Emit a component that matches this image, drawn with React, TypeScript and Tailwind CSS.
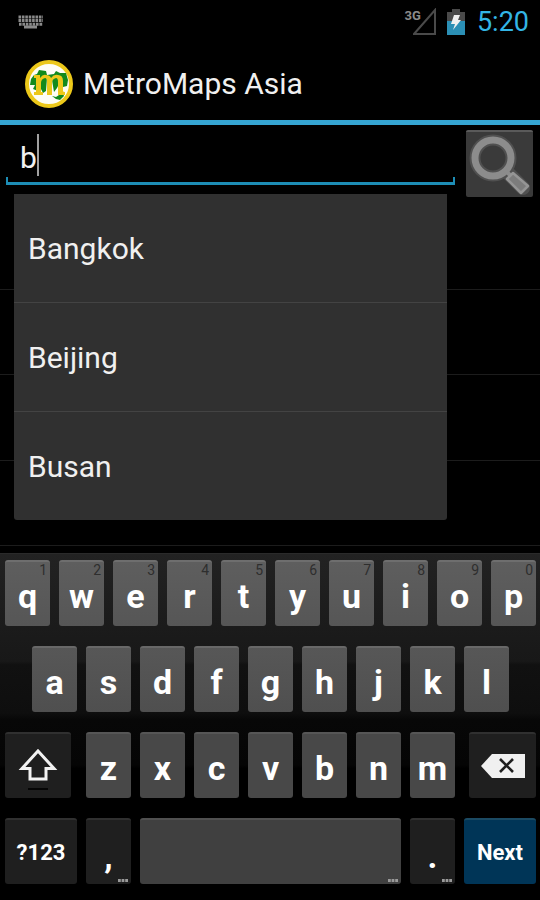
import React, { useState } from 'react'

interface KeyProps {
  label: string
  hint?: string
  className?: string
}

const cities = ['Bangkok', 'Beijing', 'Busan', 'Hong Kong', 'Tokyo']

const topRow = ['q', 'w', 'e', 'r', 't', 'y', 'u', 'i', 'o', 'p']
const middleRow = ['a', 's', 'd', 'f', 'g', 'h', 'j', 'k', 'l']
const bottomRow = ['z', 'x', 'c', 'v', 'b', 'n', 'm']

function StatusBar() {
  return (
    <div className="h-11 flex items-center justify-between pl-[18px] pr-[11px]">
      <svg width="26" height="14" viewBox="0 0 26 14" aria-hidden="true">
        <g stroke="#8a8a8a" strokeWidth="3" strokeDasharray="2.6 0.8">
          <path d="M0.5 2H25" />
          <path d="M0.5 5.6H25" />
          <path d="M1 9.2H25" />
        </g>
        <path d="M6 12H19" stroke="#8a8a8a" strokeWidth="3" />
      </svg>
      <div className="flex items-center">
        <span className="self-start text-[13px] leading-5 font-bold text-[#8a8a8a]">3G</span>
        <svg className="-ml-2" width="24" height="28" viewBox="0 0 24 28" aria-hidden="true">
          <path d="M22 2V26H1Z" fill="none" stroke="#4a4a4a" strokeWidth="2" />
        </svg>
        <svg className="ml-2.5" width="18" height="28" viewBox="0 0 18 28" aria-hidden="true">
          <path d="M5 1H13V4H18V14H0V4H5Z" fill="#4a4a4a" />
          <path d="M0 13H18V27H0Z" fill="#2b8fb5" />
          <path d="M7 7H13L11 12H14L6 22L8 16H4Z" fill="#f0f0f0" />
        </svg>
        <span className="ml-3 text-[27px] leading-8 text-[#33b5e5]">5:20</span>
      </div>
    </div>
  )
}

function Logo() {
  return (
    <svg width="48" height="48" viewBox="0 0 48 48" aria-hidden="true">
      <circle cx="24" cy="24" r="22" fill="#fdfdf5" stroke="#ecc81a" strokeWidth="4" />
      <path
        d="M6 19L9 15L12 14L14 10L21 11L22 15L29 14L31 11L35 13L41 13L43 20L42 26L38 27L34 24L32 28L29 32L27 20L22 18L21 31L18 33L16 29L13 31L8 29L10 25L5 25Z"
        fill="#128a1c"
      />
      <path d="M27 36L31 37L34 35L38 33L39 36L35 40L31 39Z" fill="#128a1c" />
      <path
        d="M9 15H15V18Q18 14 21 15Q25 15 26 18Q29 14 33 15Q38 15 38 21V31Q38 32 40 32V35H33V22Q33 18 31 18Q27 19 27 23V35H22V22Q22 18 20 18Q16 19 16 23V32H18V35H9V32H11V18H9Z"
        fill="#ecc81a"
      />
    </svg>
  )
}

function LetterKey({ label, hint, className = '' }: KeyProps) {
  return (
    <button
      type="button"
      aria-label={label}
      className={`relative col-span-2 h-[66px] rounded-[3px] border-t-2 text-white text-[34px] leading-8 font-bold pt-1 ${className}`}
    >
      {label}
      {hint && (
        <span className="absolute top-0 right-[3px] text-[14px] leading-4 font-normal text-[#2e2e2e]">{hint}</span>
      )}
    </button>
  )
}

function MoreDots() {
  return (
    <svg className="absolute right-[3px] bottom-[2px]" width="10" height="3" viewBox="0 0 10 3" aria-hidden="true">
      <path d="M0 1.5H10" stroke="#999999" strokeWidth="3" strokeDasharray="2.8 0.8" />
    </svg>
  )
}

function Keyboard() {
  const darkKey = 'h-[66px] rounded-[3px] border-t-2 border-[#303030] bg-[#1f1f1f] text-white'

  return (
    <div className="grid grid-cols-20 gap-x-[9px] gap-y-5 pt-1.5 pb-4 pl-[5px] pr-1 border-t border-[#2a2a2a] bg-[linear-gradient(#222222,#1c1c1c_18%,#181818_31%,#111111_32%,#0e0e0e_46%,#070707_48%,#050505_61%,#000000_62%)]">
      {topRow.map((key, i) => (
        <LetterKey key={key} label={key} hint={String((i + 1) % 10)} className="border-[#6e6e6e] bg-linear-to-b from-[#5e5e5e] to-[#565656]" />
      ))}

      {middleRow.map((key, i) => (
        <LetterKey
          key={key}
          label={key}
          className={`border-[#686868] bg-linear-to-b from-[#575757] to-[#4f4f4f] ${i === 0 ? 'col-start-2' : ''}`}
        />
      ))}

      <button type="button" aria-label="Shift" className={`${darkKey} col-start-1 col-span-3 mr-1.5 flex items-center justify-center`}>
        <svg width="42" height="48" viewBox="0 0 42 48" aria-hidden="true">
          <path d="M21 9L37 26.5H29V37H13V26.5H5Z" fill="none" stroke="#f2f2f2" strokeWidth="3" />
          <path d="M11 47H31" stroke="#050505" strokeWidth="2" />
        </svg>
      </button>
      {bottomRow.map((key) => (
        <LetterKey key={key} label={key} className="border-[#565656] bg-[#484848]" />
      ))}
      <button type="button" aria-label="Delete" className={`${darkKey} col-span-3 ml-[5px] flex items-center justify-center`}>
        <svg width="46" height="26" viewBox="0 0 46 26" aria-hidden="true">
          <path d="M1 13L12 1H45V25H12Z" fill="#f0f0f0" />
          <path d="M20 6L33 19M33 6L20 19" stroke="#1f1f1f" strokeWidth="2.6" />
        </svg>
      </button>

      <button type="button" className={`${darkKey} col-span-3 text-[22px] font-bold`}>?123</button>
      <button type="button" className={`${darkKey} relative col-span-2 text-[34px] leading-8 font-bold pt-2`}>
        ,
        <MoreDots />
      </button>
      <button type="button" aria-label="Space" className="relative col-span-10 h-[66px] rounded-[3px] border-t-2 border-[#505050] bg-[#404040]">
        <MoreDots />
      </button>
      <button type="button" className={`${darkKey} relative col-span-2 text-[34px] leading-8 font-bold pt-2`}>
        .
        <MoreDots />
      </button>
      <button type="button" className="col-span-3 h-[66px] rounded-[3px] border-t-2 border-[#1b4a63] bg-[#003557] text-white text-[22px] font-bold">
        Next
      </button>
    </div>
  )
}

export default function App() {
  const [query, setQuery] = useState('b')
  const matches = cities.filter((city) => city.toLowerCase().startsWith(query.toLowerCase()))

  return (
    <div className="min-h-screen flex flex-col bg-black text-[#f0f0f0] font-[Roboto,sans-serif]">
      <StatusBar />

      <header className="h-[76px] flex items-center gap-[10px] px-[25px] pt-1">
        <Logo />
        <h1 className="text-[30px] leading-9">MetroMaps Asia</h1>
      </header>

      <main className="flex-1 flex flex-col border-t-[5px] border-[#35a5d2]">
        <form className="relative flex items-start gap-[11px] pl-[6px] pr-[7px] pt-[5px]" onSubmit={(e) => e.preventDefault()}>
          <div className="relative flex-1">
            <div className="h-[54px] flex items-center pl-[14px]">
              <input
                type="text"
                aria-label="City"
                value={query}
                onChange={(e) => setQuery(e.target.value)}
                className="field-sizing-content h-12 bg-transparent text-[30px] leading-10 outline-none"
              />
              <span className="w-[2px] h-[42px] mb-1 bg-[#a0a0a0]" />
            </div>
            <div className="absolute inset-x-0 top-[47px] h-2 border-x-2 border-b-[3px] border-[#1d8db5]" />
          </div>
          <button type="submit" aria-label="Search" className="w-[67px] h-[67px] rounded-[2px] border-t-2 border-[#5a5a5a] bg-[#3a3a3a]">
            <svg width="67" height="65" viewBox="0 0 67 65" aria-hidden="true">
              <circle cx="27" cy="26" r="18" fill="none" stroke="#505050" strokeWidth="11" />
              <path d="M42 41L57 56" stroke="#505050" strokeWidth="14" strokeLinecap="round" />
              <circle cx="27" cy="26" r="18" fill="none" stroke="#8c8c8c" strokeWidth="7" />
              <path d="M39 38L45 44" stroke="#8c8c8c" strokeWidth="4" />
              <path d="M41 47L47 41L62 54L55 61Z" fill="#7c7c7c" stroke="#959595" strokeWidth="2.5" strokeLinejoin="round" />
            </svg>
          </button>

          <ul className="absolute left-[14px] right-[93px] top-[69px] z-10 rounded-b-[3px] bg-[#303030] divide-y divide-[#434343]">
            {matches.map((city) => (
              <li key={city}>
                <button type="button" onClick={() => setQuery(city)} className="w-full h-[108px] px-[14px] pt-0.5 text-left text-[30px] leading-9">
                  {city}
                </button>
              </li>
            ))}
          </ul>
        </form>

        <div className="pt-[6px]">
          <div className="h-[87px] border-b border-[#1c1c1c]" />
          <div className="h-[85px] border-b border-[#1c1c1c]" />
          <div className="h-[86px] border-b border-[#1c1c1c]" />
          <div className="h-[85px] border-b border-[#1c1c1c]" />
        </div>
      </main>

      <Keyboard />
    </div>
  )
}
